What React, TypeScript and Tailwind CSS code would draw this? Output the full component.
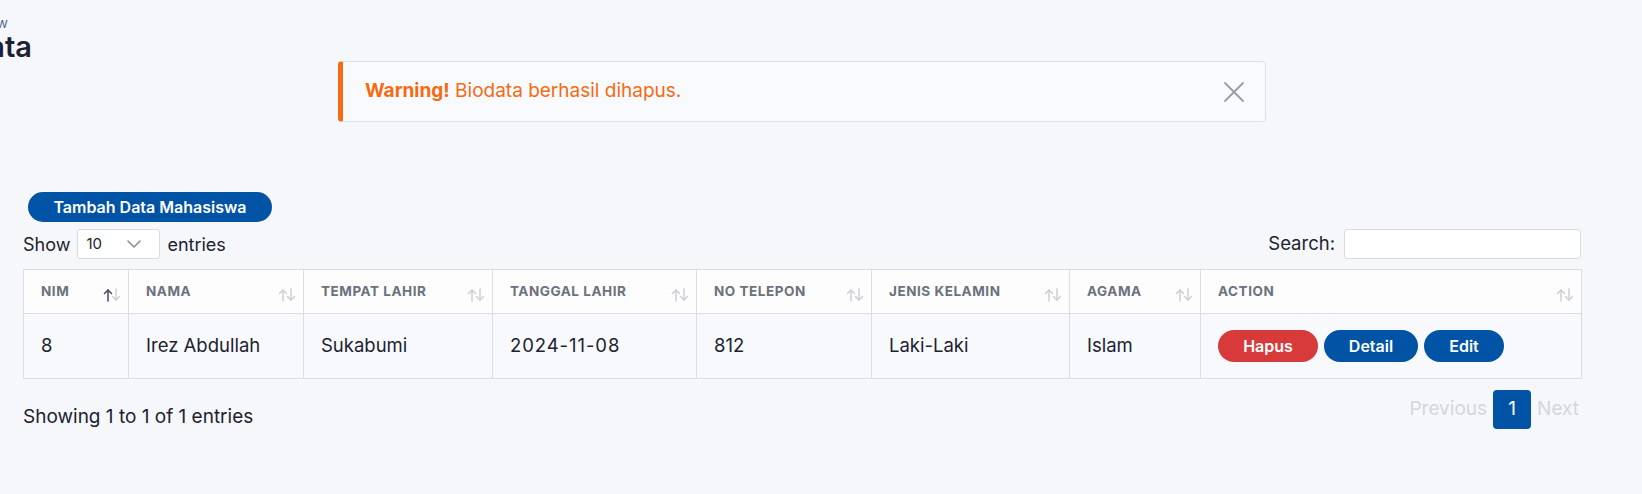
import React from 'react';

const columns = [
  { label: 'NIM', width: 105, active: true },
  { label: 'Nama', width: 175 },
  { label: 'Tempat Lahir', width: 189 },
  { label: 'Tanggal Lahir', width: 204 },
  { label: 'No Telepon', width: 175 },
  { label: 'Jenis Kelamin', width: 198 },
  { label: 'Agama', width: 131 },
  { label: 'Action', width: 381 },
];

const rows = [
  {
    nim: '8',
    nama: 'Irez Abdullah',
    tempat: 'Sukabumi',
    tanggal: '2024-11-08',
    telepon: '812',
    kelamin: 'Laki-Laki',
    agama: 'Islam',
  },
];

const SortIcon: React.FC<{ active?: boolean }> = ({ active }) => (
  <svg width="18" height="14" viewBox="0 0 18 14" fill="none" strokeWidth="1.6" strokeLinecap="round" strokeLinejoin="round">
    <g stroke={active ? '#4b5563' : '#cdd1d7'}>
      <path d="M5 13V2" />
      <path d="M1.5 5.5L5 2l3.5 3.5" />
    </g>
    <g stroke="#cdd1d7">
      <path d="M13 1v11" />
      <path d="M9.5 8.5L13 12l3.5-3.5" />
    </g>
  </svg>
);

export default function App() {
  return (
    <div className="min-h-screen bg-[#f6f7fb] font-['Inter',sans-serif] text-[#1c2230]">
      {/* page title, scrolled off to the left */}
      <div className="pt-[14px] h-[61px]">
        <div className="w-[8px] flex justify-end whitespace-nowrap text-[14px] leading-[18px] text-[#5b6b8f]">
          Overview
        </div>
        <div className="w-[32px] flex justify-end whitespace-nowrap text-[29px] leading-[30px] font-semibold text-[#1b2232]">
          Biodata
        </div>
      </div>

      <div className="ml-[23px] w-[1558px]">
        <div className="mx-auto w-[928px] h-[61px] flex items-center justify-between rounded-[4px] border border-[#dcdfe5] border-l-[5px] border-l-[#f46b12] bg-[#f9fafd] pl-[22px] pr-[20px]">
          <p className="text-[19px] text-[#f46b12]">
            <span className="font-bold">Warning!</span> Biodata berhasil dihapus.
          </p>
          <button className="text-[#979ca5]">
            <svg width="22" height="22" viewBox="0 0 22 22" fill="none" stroke="currentColor" strokeWidth="1.8" strokeLinecap="round">
              <path d="M2 2l18 18M20 2L2 20" />
            </svg>
          </button>
        </div>

        <button className="mt-[70px] ml-[5px] w-[244px] h-[30px] rounded-full bg-[#0153a5] text-white text-[16px] font-semibold">
          Tambah Data Mahasiswa
        </button>

        <div className="mt-[7px] h-[30px] flex items-center justify-between text-[18px]">
          <div className="flex items-center gap-[7px]">
            <span>Show</span>
            <div className="w-[83px] h-[30px] flex items-center justify-between rounded-[3px] border border-[#d8dbe0] bg-white pl-[8px] pr-[18px] text-[15px]">
              <span>10</span>
              <svg width="14" height="8" viewBox="0 0 14 8" fill="none" stroke="#8b9099" strokeWidth="1.6" strokeLinecap="round" strokeLinejoin="round">
                <path d="M1 1l6 6 6-6" />
              </svg>
            </div>
            <span>entries</span>
          </div>
          <div className="flex items-center gap-[9px]">
            <span className="text-[18.5px]">Search:</span>
            <input className="w-[237px] h-[30px] rounded-[3px] border border-[#d8dbe0] bg-white outline-none" />
          </div>
        </div>

        <table className="mt-[10px] w-full table-fixed border-collapse">
          <colgroup>
            {columns.map((c) => (
              <col key={c.label} style={{ width: c.width }} />
            ))}
          </colgroup>
          <thead>
            <tr className="h-[44px] bg-[#fdfdfe]">
              {columns.map((c) => (
                <th key={c.label} className="border border-[#dadde2] pl-[17px] pr-[7px] text-left">
                  <div className="flex items-center justify-between">
                    <span className="text-[13.5px] font-bold uppercase tracking-[0.04em] text-[#6b717d]">{c.label}</span>
                    <span className="mt-[6px]">
                      <SortIcon active={c.active} />
                    </span>
                  </div>
                </th>
              ))}
            </tr>
          </thead>
          <tbody>
            {rows.map((r) => (
              <tr key={r.nim} className="h-[65px] bg-[#f8f9fc] text-[18.5px]">
                <td className="border border-[#dadde2] pl-[17px]">{r.nim}</td>
                <td className="border border-[#dadde2] pl-[17px]">{r.nama}</td>
                <td className="border border-[#dadde2] pl-[17px]">{r.tempat}</td>
                <td className="border border-[#dadde2] pl-[17px] tracking-[0.05em]">{r.tanggal}</td>
                <td className="border border-[#dadde2] pl-[17px]">{r.telepon}</td>
                <td className="border border-[#dadde2] pl-[17px]">{r.kelamin}</td>
                <td className="border border-[#dadde2] pl-[17px]">{r.agama}</td>
                <td className="border border-[#dadde2] pl-[17px]">
                  <div className="flex items-center gap-[6px] text-[16px] font-semibold text-white">
                    <button className="w-[100px] h-[32px] rounded-full bg-[#d83a3b]">Hapus</button>
                    <button className="w-[94px] h-[32px] rounded-full bg-[#0153a5]">Detail</button>
                    <button className="w-[80px] h-[32px] rounded-full bg-[#0153a5]">Edit</button>
                  </div>
                </td>
              </tr>
            ))}
          </tbody>
        </table>

        <div className="mt-[11px] flex items-start justify-between">
          <p className="mt-[15px] text-[19px] leading-[24px]">Showing 1 to 1 of 1 entries</p>
          <div className="flex items-center gap-[6px] pr-[2px] text-[19px] text-[#d3d6db]">
            <span>Previous</span>
            <span className="w-[38px] h-[39px] flex items-center justify-center rounded-[4px] bg-[#0153a5] text-white">1</span>
            <span>Next</span>
          </div>
        </div>
      </div>
    </div>
  );
}
